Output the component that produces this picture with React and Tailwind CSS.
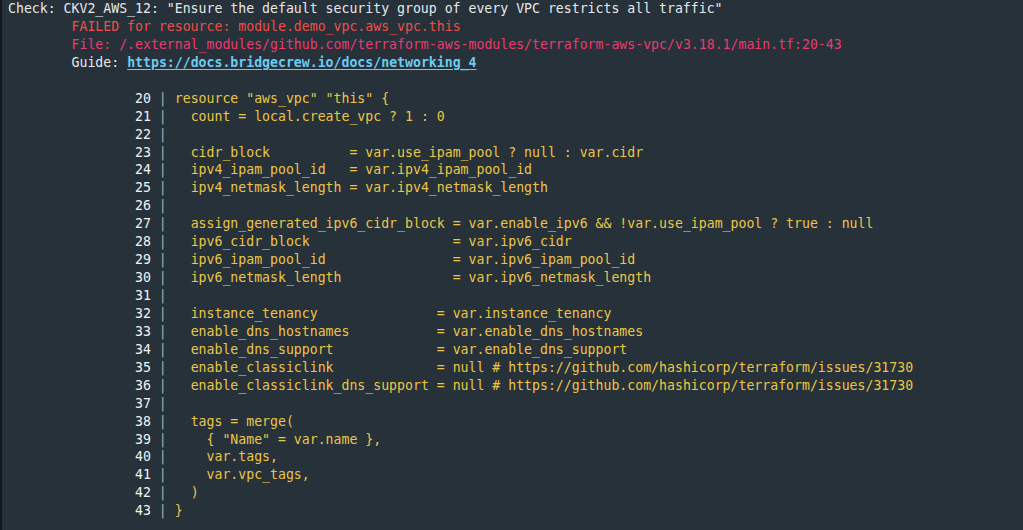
const codeLines = [
  [20, 'resource "aws_vpc" "this" {'],
  [21, '  count = local.create_vpc ? 1 : 0'],
  [22, ''],
  [23, '  cidr_block          = var.use_ipam_pool ? null : var.cidr'],
  [24, '  ipv4_ipam_pool_id   = var.ipv4_ipam_pool_id'],
  [25, '  ipv4_netmask_length = var.ipv4_netmask_length'],
  [26, ''],
  [27, '  assign_generated_ipv6_cidr_block = var.enable_ipv6 && !var.use_ipam_pool ? true : null'],
  [28, '  ipv6_cidr_block                  = var.ipv6_cidr'],
  [29, '  ipv6_ipam_pool_id                = var.ipv6_ipam_pool_id'],
  [30, '  ipv6_netmask_length              = var.ipv6_netmask_length'],
  [31, ''],
  [32, '  instance_tenancy               = var.instance_tenancy'],
  [33, '  enable_dns_hostnames           = var.enable_dns_hostnames'],
  [34, '  enable_dns_support             = var.enable_dns_support'],
  [35, '  enable_classiclink             = null # https://github.com/hashicorp/terraform/issues/31730'],
  [36, '  enable_classiclink_dns_support = null # https://github.com/hashicorp/terraform/issues/31730'],
  [37, ''],
  [38, '  tags = merge('],
  [39, '    { "Name" = var.name },'],
  [40, '    var.tags,'],
  [41, '    var.vpc_tags,'],
  [42, '  )'],
  [43, '}'],
];

const App = () => {
  return (
    <div
      className="w-[1023px] h-[530px] overflow-hidden bg-[#27313a] border-l-2 border-[#14181b] text-[13.2px] leading-[17.93px] whitespace-pre"
      style={{ fontFamily: '"DejaVu Sans Mono", "Liberation Mono", monospace' }}
    >
      <div className="pl-[6px]">
        <div className="text-[#e6e8ea]">
          Check: CKV2_AWS_12: "Ensure the default security group of every VPC restricts all traffic"
        </div>
        <div className="text-[#ec4f4b]">{'        '}FAILED for resource: module.demo_vpc.aws_vpc.this</div>
        <div className="text-[#ea3b6e]">
          {'        '}File: /.external_modules/github.com/terraform-aws-modules/terraform-aws-vpc/v3.18.1/main.tf:20-43
        </div>
        <div className="text-[#e6e8ea]">
          {'        '}Guide:{' '}
          <span className="text-[#6ccbf2] font-bold underline underline-offset-2">
            https://docs.bridgecrew.io/docs/networking_4
          </span>
        </div>
        <div>{' '}</div>

        {codeLines.map(([num, code]) => (
          <div key={num}>
            <span className="text-[#f2f3f4]">{'                ' + num}</span>
            <span className="text-[#a9adb1]"> | </span>
            <span className="text-[#ebc645]">{code}</span>
          </div>
        ))}
      </div>
    </div>
  );
};

export default App;
